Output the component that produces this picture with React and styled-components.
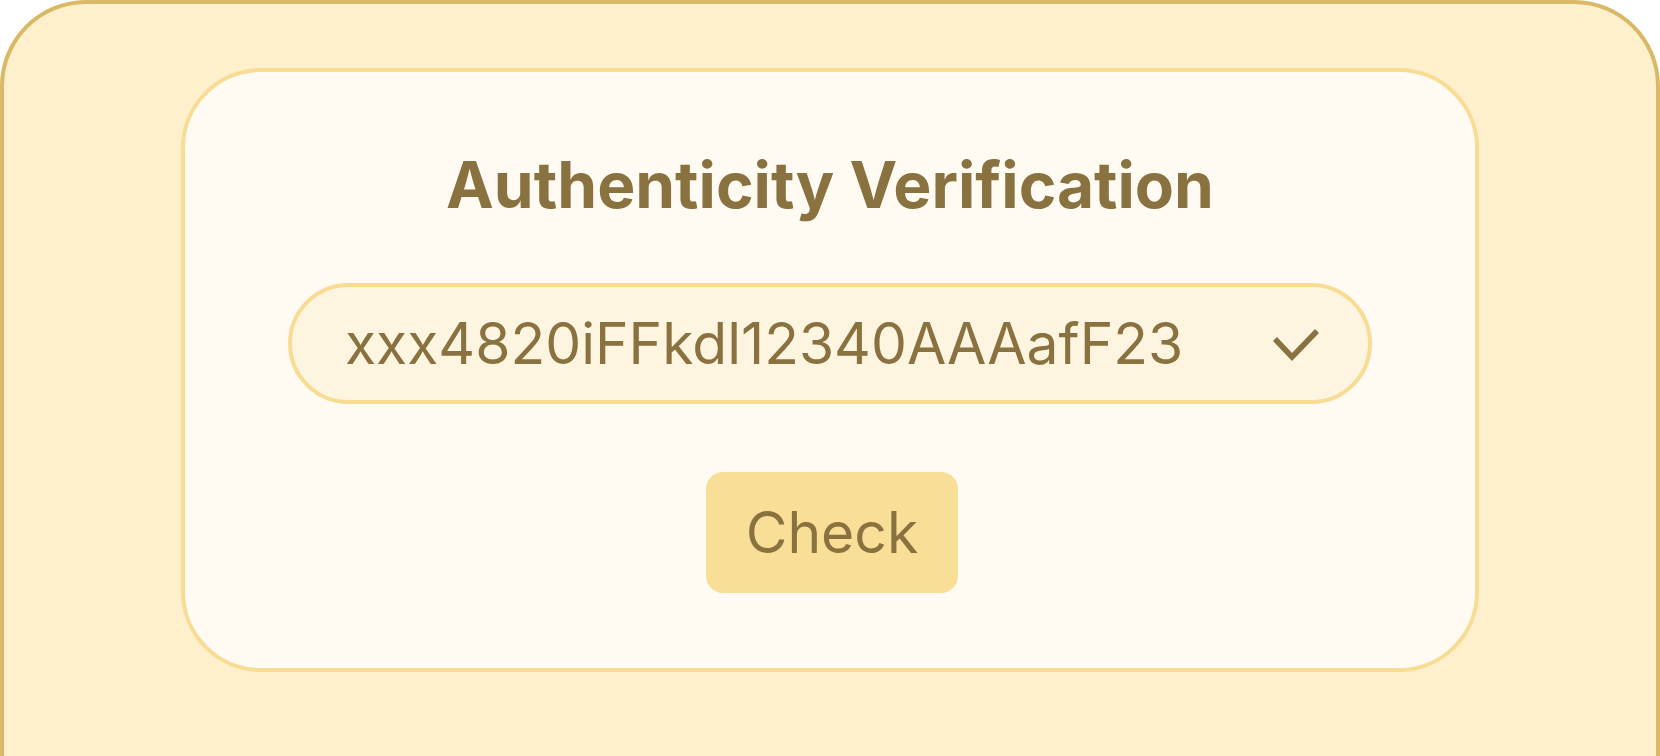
import React from 'react'
import styled, { createGlobalStyle } from 'styled-components'

const GlobalStyle = createGlobalStyle`
    html, body {
        margin: 0;
        height: 100%;
        overflow: hidden;
        background: #FFFFFF;
    }
    body {
        font-family: Inter, 'Noto Sans', sans-serif;
    }
    * {
        box-sizing: border-box;
    }
`

const Frame = styled.div`
    background: #FEF0CC;
    border: 4px solid #D9B965;
    border-bottom: none;
    border-radius: 86px 86px 0 0;
    padding: 64px 177px 0;
    height: 756px;
`

const Card = styled.div`
    background: #FFFBF3;
    border: 4px solid #F8DC94;
    border-radius: 80px;
    height: 604px;
    padding-top: 81px;
    display: flex;
    flex-direction: column;
    align-items: center;
`

const Title = styled.h1`
    margin: 0;
    font-size: 64px;
    line-height: 1;
    font-weight: 700;
    color: #89723F;
`

const CodeField = styled.div`
    margin-top: 66px;
    width: 1084px;
    height: 121px;
    border: 4px solid #F8DC94;
    border-radius: 61px;
    background: #FEF5E0;
    display: flex;
    align-items: center;
    justify-content: space-between;
    padding: 0 48px 0 53px;
`

const Code = styled.span`
    font-size: 57px;
    line-height: 1;
    font-weight: 400;
    color: #89723F;
`

const CheckButton = styled.button`
    margin: 68px 0 0 4px;
    width: 252px;
    height: 121px;
    border: none;
    border-radius: 17px;
    background: #F8DE97;
    font-family: Inter, 'Noto Sans', sans-serif;
    font-size: 57px;
    font-weight: 400;
    color: #89723F;
    cursor: pointer;
`

function Tick() {
    return (
        <svg width="48" height="34" viewBox="0 0 48 34">
            <polyline
                points="3,12 20,30 45,4"
                fill="none"
                stroke="#89723F"
                strokeWidth="5.5"
                strokeLinecap="butt"
                strokeLinejoin="miter"
            />
        </svg>
    )
}

export default () => {
    return (
        <>
            <GlobalStyle />
            <Frame>
                <Card>
                    <Title>Authenticity Verification</Title>
                    <CodeField>
                        <Code>xxx4820iFFkdl12340AAAafF23</Code>
                        <Tick />
                    </CodeField>
                    <CheckButton>Check</CheckButton>
                </Card>
            </Frame>
        </>
    )
}
